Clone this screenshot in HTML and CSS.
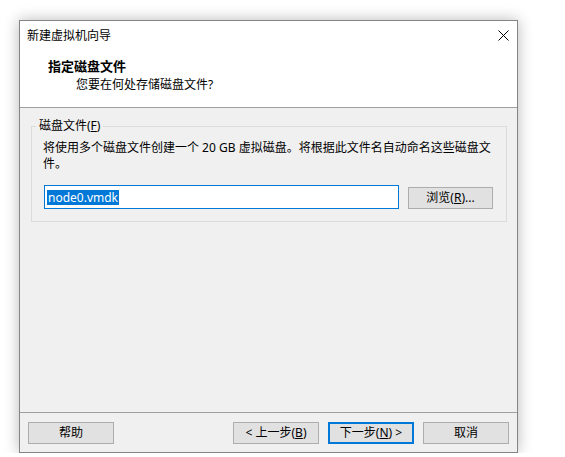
FILE: index.html
```html
<!DOCTYPE html>
<html lang="zh-CN">

<head>
    <meta charset="UTF-8">
    <meta name="viewport" content="width=device-width, initial-scale=1.0">
    <title>新建虚拟机向导</title>
    <link rel="stylesheet" href="styles.css">
</head>

<body>
    <div class="wizard">
        <div class="top">
            <div class="titlebar">
                <span class="title">新建虚拟机向导</span>
                <svg class="close" width="11" height="11" viewBox="0 0 11 11">
                    <path d="M0.5 0.5 L10.5 10.5 M10.5 0.5 L0.5 10.5" stroke="#000" stroke-width="1" fill="none" />
                </svg>
            </div>
            <div class="header">
                <div class="heading">指定磁盘文件</div>
                <div class="subheading">您要在何处存储磁盘文件?</div>
            </div>
        </div>

        <div class="content">
            <div class="group">
                <span class="legend">磁盘文件(<u>F</u>)</span>
                <p class="desc">将使用多个磁盘文件创建一个 20 GB 虚拟磁盘。将根据此文件名自动命名这些磁盘文<br>件。</p>
                <div class="file-row">
                    <div class="textbox"><span class="selected">node0.vmdk</span></div>
                    <button class="btn browse">浏览(<u>R</u>)...</button>
                </div>
            </div>
        </div>

        <div class="footer">
            <button class="btn">帮助</button>
            <div class="nav">
                <button class="btn">&lt; 上一步(<u>B</u>)</button>
                <button class="btn default">下一步(<u>N</u>) &gt;</button>
                <button class="btn">取消</button>
            </div>
        </div>
    </div>
</body>

</html>
```

FILE: styles.css
```css
body {
    margin: 0;
    padding: 20px 0 0 19px;
    background: #ffffff;
    font-family: "Noto Sans", "Noto Sans CJK SC", sans-serif;
    font-size: 12px;
    color: #000;
}
.wizard {
    width: 499px;
    height: 433px;
    box-sizing: border-box;
    border: 1px solid #858585;
    box-shadow: 0 0 14px rgba(0, 0, 0, 0.28);
    background: #f0f0f0;
    display: flex;
    flex-direction: column;
}
.top {
    height: 86px;
    background: #ffffff;
    border-bottom: 1px solid #a0a0a0;
}
.titlebar {
    height: 29px;
    display: flex;
    align-items: center;
    justify-content: space-between;
    padding: 0 8px 0 7px;
}
.title {
    line-height: 16px;
}
.close {
    display: block;
}
.header {
    padding: 8px 0 0 28px;
}
.heading {
    font-weight: bold;
    font-size: 13px;
    line-height: 16px;
}
.subheading {
    margin: 3px 0 0 28px;
    line-height: 16px;
}
.content {
    flex: 1;
    padding: 18px 10px 0 11px;
    border-bottom: 1px solid #a0a0a0;
}
.group {
    position: relative;
    border: 1px solid #dcdcdc;
    padding: 13px 12px 12px 12px;
}
.legend {
    position: absolute;
    top: -9px;
    left: 4px;
    padding: 0 3px;
    background: #f0f0f0;
    line-height: 16px;
}
.desc {
    margin: 0 0 13px -1px;
    line-height: 16px;
}
.file-row {
    display: flex;
    align-items: center;
    gap: 9px;
}
.textbox {
    width: 355px;
    height: 24px;
    box-sizing: border-box;
    border: 1px solid #0078d7;
    background: #ffffff;
    padding: 0 0 0 2px;
    display: flex;
    align-items: center;
}
.selected {
    background: #0078d7;
    color: #ffffff;
    line-height: 15px;
    padding: 0 1px;
}
.btn {
    width: 86px;
    height: 22px;
    box-sizing: border-box;
    border: 1px solid #adadad;
    background: #e1e1e1;
    font-family: "Noto Sans", "Noto Sans CJK SC", sans-serif;
    font-size: 12px;
    color: #000;
    padding: 0;
    line-height: 18px;
}
.browse {
    width: 85px;
    margin-top: 1px;
}
.default {
    border: 2px solid #0078d7;
}
.footer {
    height: 39px;
    box-sizing: border-box;
    padding: 9px 8px 0 8px;
    display: flex;
    justify-content: space-between;
    align-items: flex-start;
}
.nav {
    display: flex;
    gap: 9px;
}
```
